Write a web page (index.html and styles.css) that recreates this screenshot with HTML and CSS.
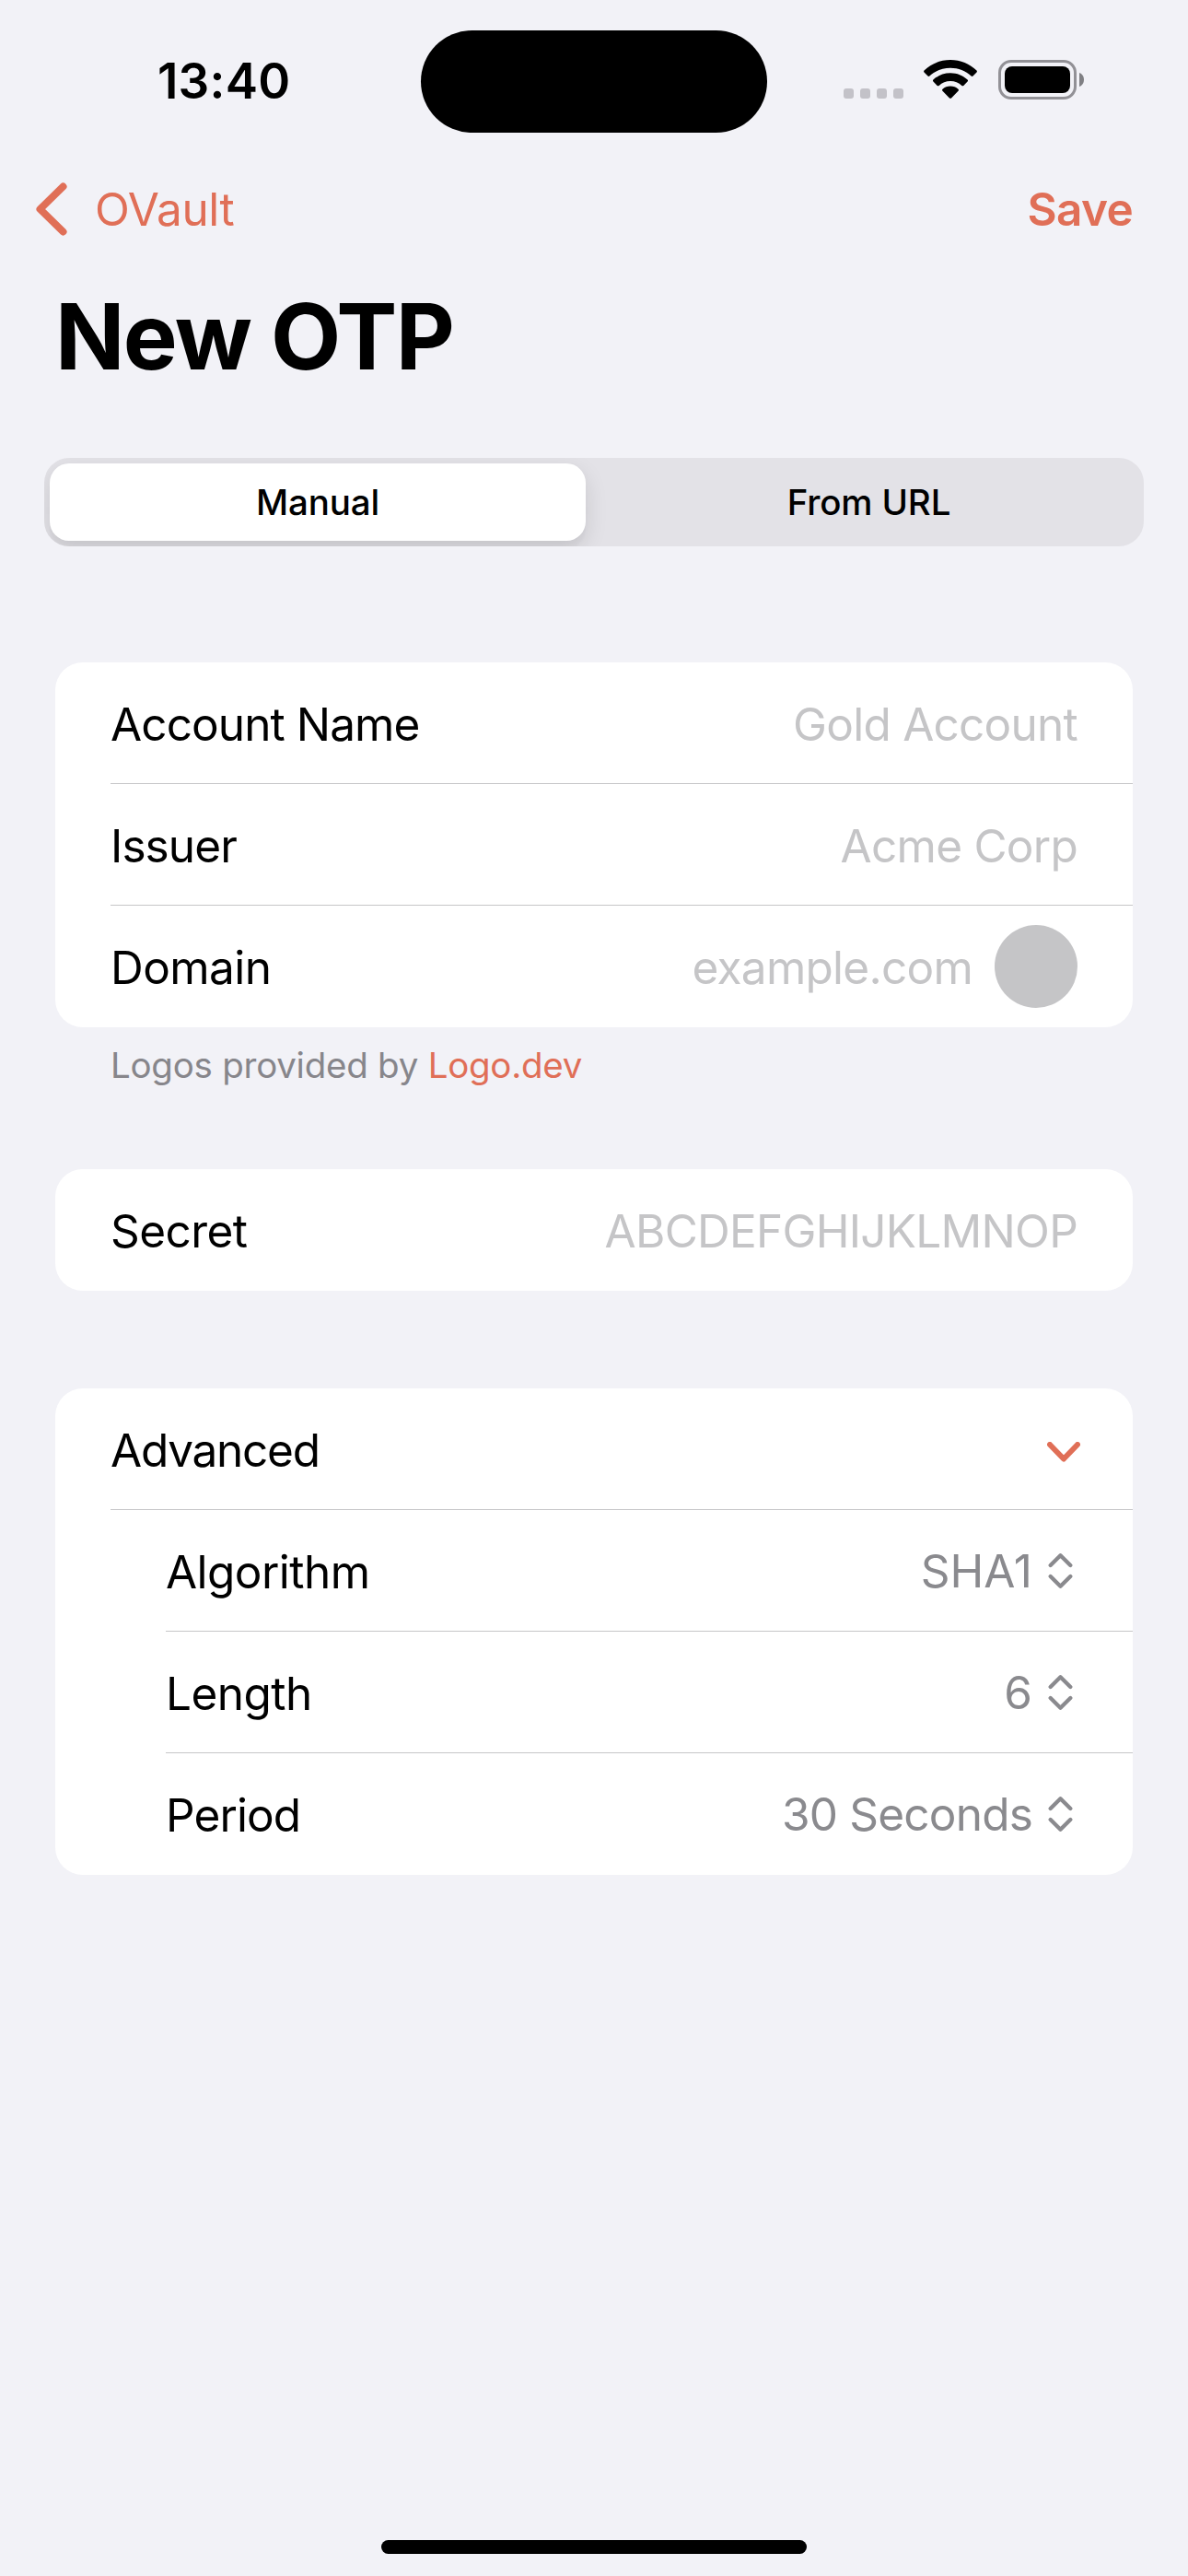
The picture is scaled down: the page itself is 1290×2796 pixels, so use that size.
FILE: index.html
```html
<!DOCTYPE html>
<html lang="en">
<head>
<meta charset="utf-8">
<title>New OTP</title>
<link rel="stylesheet" href="styles.css">
</head>
<body>
<div class="screen">
  <header class="status">
    <span class="time">13:40</span>
    <div class="island"></div>
    <div class="indicators">
      <svg class="dots" width="65" height="11" viewBox="0 0 65 11"><rect width="11" height="11" rx="3"/><rect x="18" width="11" height="11" rx="3"/><rect x="36" width="11" height="11" rx="3"/><rect x="54" width="11" height="11" rx="3"/></svg>
      <svg class="wifi" width="58" height="42" viewBox="0 0 58 42"><path d="M29 0C40 0 50 4.300 57.500 11.500Q58.300 12.500 57.500 13.500L53.500 17.600Q52.600 18.400 51.600 17.600C45.500 12 37.600 8.800 29 8.800S12.500 12 6.400 17.600Q5.400 18.400 4.500 17.600L.5 13.500Q-.3 12.500.5 11.500C8 4.300 18 0 29 0Z"/><path d="M29 14.300C36.200 14.300 42.700 17 47.600 21.600Q48.500 22.600 47.600 23.600L43.300 27.900Q42.400 28.700 41.400 27.900C38 24.900 33.700 23.100 29 23.100S20 24.900 16.600 27.900Q15.600 28.700 14.700 27.900L10.400 23.600Q9.500 22.600 10.400 21.600C15.300 17 21.800 14.300 29 14.300Z"/><path d="M29 28.600C32.300 28.600 35.200 29.700 37.500 31.700Q38.500 32.700 37.500 33.700L30 41.400Q29 42.200 28 41.400L20.500 33.700Q19.500 32.700 20.500 31.700C22.800 29.700 25.700 28.600 29 28.600Z"/></svg>
      <svg class="battery" width="94" height="43" viewBox="0 0 94 43"><rect class="shell" x="1.500" y="1.500" width="82" height="40" rx="12.500"/><rect x="7" y="7" width="71" height="29" rx="8"/><path class="nub" d="M88 14c3 1 5 4 5 7.500s-2 6.500-5 7.500z"/></svg>
    </div>
  </header>

  <nav class="navbar">
    <a class="back"><svg width="34" height="58" viewBox="0 0 34 58"><path d="M29.500 4.500L4.500 29L29.500 53.500"/></svg><span>OVault</span></a>
    <a class="save">Save</a>
  </nav>

  <h1 class="title"><span>New OTP</span></h1>

  <div class="segments">
    <div class="segment selected"><span>Manual</span></div>
    <div class="segment"><span>From URL</span></div>
  </div>

  <main class="form">
    <section class="card">
      <div class="row"><span class="label">Account Name</span><span class="placeholder">Gold Account</span></div>
      <div class="row"><span class="label">Issuer</span><span class="placeholder">Acme Corp</span></div>
      <div class="row"><span class="label snug">Domain</span><span class="placeholder">example.com</span><i class="logo"></i></div>
    </section>
    <p class="footnote"><span>Logos provided by</span> <a>Logo.dev</a></p>
    <section class="card">
      <div class="row"><span class="label snug">Secret</span><span class="placeholder">ABCDEFGHIJKLMNOP</span></div>
    </section>
    <section class="card advanced">
      <div class="row"><span class="label tight">Advanced</span><svg class="disclose" width="36" height="22" viewBox="0 0 36 22"><path d="M3 3L18 18.500L33 3"/></svg></div>
      <div class="row sub"><span class="label snug">Algorithm</span><span class="value wide">SHA1</span><svg class="picker" width="27" height="40" viewBox="0 0 27 40"><path d="M2.700 14L13.500 3.300L24.300 14M2.700 26L13.500 36.700L24.300 26"/></svg></div>
      <div class="row sub"><span class="label snug">Length</span><span class="value wide">6</span><svg class="picker" width="27" height="40" viewBox="0 0 27 40"><path d="M2.700 14L13.500 3.300L24.300 14M2.700 26L13.500 36.700L24.300 26"/></svg></div>
      <div class="row sub"><span class="label">Period</span><span class="value">30 Seconds</span><svg class="picker" width="27" height="40" viewBox="0 0 27 40"><path d="M2.700 14L13.500 3.300L24.300 14M2.700 26L13.500 36.700L24.300 26"/></svg></div>
    </section>
  </main>

  <div class="home"></div>
</div>
</body>
</html>
```
FILE: styles.css
```css
* { box-sizing: border-box; margin: 0; padding: 0; }

body {
  background: #f2f2f7;
  color: #000;
  font-family: Inter, "Liberation Sans", sans-serif;
  font-size: 49.5px;
}

svg { display: block; flex: none; }
span, a { white-space: nowrap; }

.screen {
  width: 1290px;
  height: 2796px;
  display: flex;
  flex-direction: column;
}

/* Status bar */
.status {
  height: 177px;
  padding: 33px 112px 0 171px;
  display: grid;
  grid-template-columns: 286px 376px 1fr;
  align-items: start;
}
.time { font-size: 53px; line-height: 64px; font-weight: 600; margin-top: 23px; letter-spacing: .2px; }
.island { height: 111px; border-radius: 56px; background: #000; }
.indicators { display: flex; justify-content: flex-end; align-items: flex-end; margin-top: 32px; height: 43px; }
.dots { fill: #c3c2c8; margin: 0 22px 1px 0; }
.wifi { margin: 0 23px 1px 0; }
.shell { fill: none; stroke: #929196; stroke-width: 3; }
.nub { fill: #808084; }

/* Navigation */
.navbar {
  height: 99px;
  padding: 0 60px 0 39px;
  display: flex;
  justify-content: space-between;
  align-items: center;
  color: #e06f57;
}
.back { display: flex; align-items: center; gap: 30px; letter-spacing: -.4px; }
.back path { fill: none; stroke: currentColor; stroke-width: 8; stroke-linecap: round; stroke-linejoin: round; }
.save { font-weight: 600; letter-spacing: -.7px; padding-top: 1px; }

.title { height: 221px; padding: 29px 60px 0; font-size: 99px; line-height: 120px; font-weight: 700; letter-spacing: -1.700px; }

.segments {
  height: 96px;
  margin: 0 48px;
  padding: 6px;
  border-radius: 27px;
  background: #e3e2e7;
  display: grid;
  grid-template-columns: 582px 1fr;
  column-gap: 15px;
  overflow: hidden;
  font-size: 38.500px;
  font-weight: 500;
  letter-spacing: -.15px;
}
.segment { display: flex; align-items: center; justify-content: center; }
.selected { background: #fff; border-radius: 21px; box-shadow: 0 9px 24px rgba(0, 0, 0, .12), 0 9px 3px rgba(0, 0, 0, .02); }

/* Form */
.form { padding: 126px 60px 0; }
.card { background: #fff; border-radius: 30px; }
.row { height: 132px; margin-left: 60px; padding-right: 60px; display: flex; align-items: center; border-bottom: 1px solid #c6c6c8; }
.row:last-child { border-bottom: 0; }
.sub { margin-left: 120px; }
.label, .placeholder, .value { line-height: 60px; letter-spacing: -.8px; }
.label { margin-right: auto; padding-top: 2px; letter-spacing: -.9px; }
.snug { letter-spacing: -.55px; }
.tight { letter-spacing: -1.250px; }
.placeholder { color: #c5c5c7; padding-top: 2px; letter-spacing: -.750px; }
.value { color: #8a8a8e; margin-right: -1px; }
.wide { letter-spacing: 0; }
.logo { width: 90px; height: 90px; border-radius: 50%; background: #c5c5c7; margin-left: 24px; }
.row:last-child .label, .row:last-child .placeholder { padding-top: 1px; }
.footnote { height: 154px; padding: 17px 60px 0; font-size: 38.500px; line-height: 48px; letter-spacing: -.25px; color: #87868b; }
.footnote a { color: #e06f57; }
.advanced { margin-top: 106px; }
.disclose { margin: 6px -3px 0 0; }
.disclose path { fill: none; stroke: #e06f57; stroke-width: 6; stroke-linecap: round; stroke-linejoin: round; }
.picker { margin: 0 5px 0 18px; }
.picker path { fill: none; stroke: #8a8a8e; stroke-width: 4.300; stroke-linecap: round; stroke-linejoin: round; }

.home { width: 462px; height: 15px; border-radius: 8px; background: #000; margin: auto auto 24px; }
```
